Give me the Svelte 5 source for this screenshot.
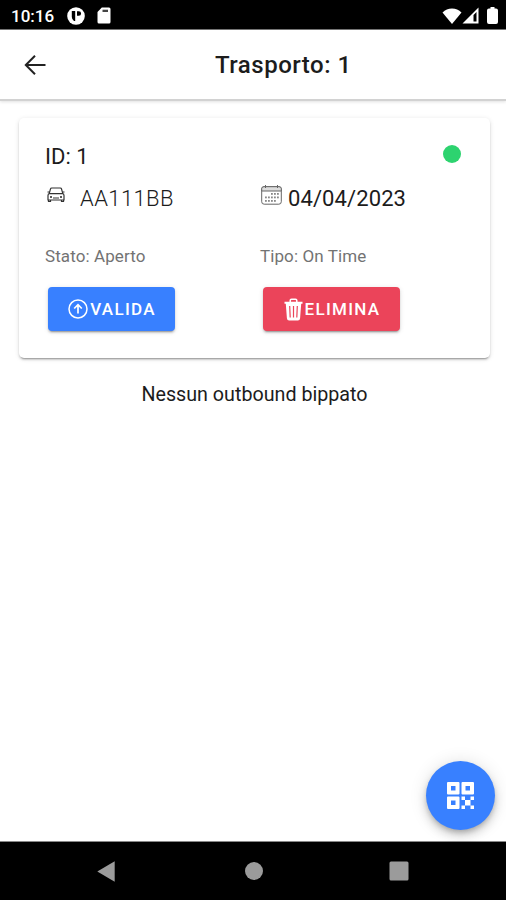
<script lang="ts">
  interface Transport {
    id: number;
    plate: string;
    date: string;
    status: string;
    type: string;
  }

  const transport: Transport = {
    id: 1,
    plate: 'AA111BB',
    date: '04/04/2023',
    status: 'Aperto',
    type: 'On Time',
  };

  // day cells of the calendar icon, top row starts later in the week
  const days = [
    [10, 8], [13, 8], [16, 8],
    [4, 11.5], [7, 11.5], [10, 11.5], [13, 11.5], [16, 11.5],
    [4, 15], [7, 15], [10, 15], [13, 15],
  ];
</script>

<div class="screen">
  <div class="status">
    <span class="status__time">10:16</span>
    <svg class="status__app" width="18" height="18" viewBox="0 0 18 18">
      <circle cx="9" cy="9" r="8.8" fill="#fff" />
      <path d="M4.8 4h3.4v10H7Q4.8 12.5 4.8 10zM10 4.2h1.8a2.2 2.2 0 0 1 0 4.6H10z" fill="#000" />
    </svg>
    <svg class="status__sd" width="14" height="17" viewBox="0 0 14 17">
      <path d="M4.8.5H12q1.5 0 1.5 1.5v13q0 1.5-1.5 1.5H2Q.5 16.5.5 15V5z" fill="#fff" />
      <path d="M5.5 2.7H11V5H5.5z" fill="#444" />
    </svg>
    <div class="status__right">
      <svg width="20" height="16" viewBox="0 0 20 16">
        <path d="M10 16 .5 4.5Q4.5.5 10 .5t9.5 4z" fill="#fff" />
      </svg>
      <svg width="17" height="17" viewBox="0 0 17 17">
        <path d="M16.5.5v16H.5zM11.5 8v6.5h3V5z" fill="#fff" fill-rule="evenodd" />
      </svg>
      <svg class="status__battery" width="11" height="17" viewBox="0 0 11 17">
        <path d="M3.5 0h4v1.5H9q2 0 2 2V15q0 2-2 2H2q-2 0-2-2V3.500q0-2 2-2h1.500z" fill="#fff" />
      </svg>
    </div>
  </div>

  <header class="toolbar">
    <button class="toolbar__back" aria-label="Indietro">
      <svg width="22" height="20" viewBox="0 0 22 20" fill="none" stroke="#222" stroke-width="2">
        <path d="M21.5 10H2M11 .8 1.800 10l9.200 9.200" />
      </svg>
    </button>
    <h1 class="toolbar__title">Trasporto: {transport.id}</h1>
  </header>

  <main class="content">
    <section class="card">
      <div class="card__head">
        <span class="card__id">ID: {transport.id}</span>
        <span class="card__dot"></span>
      </div>

      <div class="row row--main">
        <div class="cell">
          <svg class="car" width="18" height="16" viewBox="0 0 18 16" fill="none" stroke="#333" stroke-width="1.2">
            <path d="M2.200 6.700 3.500 1.800Q3.700 1 4.700 1h8.600q1 0 1.200.8l1.300 4.900M1 8.500q0-1.800 1.500-1.800h13q1.500 0 1.500 1.800V13H1zM1.500 13v1.500h2V13M14.500 13v1.500h2V13M.5 5h2M15.500 5h2M6 11h6" />
            <circle cx="4" cy="10" r="1" fill="#222" stroke="none" />
            <circle cx="14" cy="10" r="1" fill="#222" stroke="none" />
          </svg>
          <span class="plate">{transport.plate}</span>
        </div>
        <div class="cell">
          <svg class="calendar" width="21" height="20" viewBox="0 0 21 20" fill="none" stroke="#666">
            <rect x=".7" y="1.7" width="19.6" height="17.5" rx="2.5" />
            <path d="M.7 3.700q0-2 2.300-2h15q2.300 0 2.300 2V6H.7z" fill="#ddd" />
            <path d="M4.5 0v3M16.500 0v3" />
            {#each days as [x, y]}
              <rect {x} {y} width="1.8" height="1.8" fill="#888" stroke="none" />
            {/each}
          </svg>
          <span class="date">{transport.date}</span>
        </div>
      </div>

      <div class="row row--sub">
        <span class="status-text">Stato: {transport.status}</span>
        <span class="type-text">Tipo: {transport.type}</span>
      </div>

      <div class="row row--actions">
        <div>
          <button class="btn btn--primary">
            <svg width="20" height="20" viewBox="0 0 20 20" fill="none" stroke="#fff" stroke-width="1.5">
              <circle cx="10" cy="10" r="9" />
              <path d="M10 14.500V6M6.200 9.500 10 5.700l3.800 3.800" stroke-width="1.7" />
            </svg>
            <span class="btn__label">VALIDA</span>
          </button>
        </div>
        <div>
          <button class="btn btn--danger">
            <svg width="19" height="23" viewBox="0 0 19 23">
              <path d="M6.200 3.900V2.500q0-1.300 1.300-1.300h4q1.300 0 1.300 1.300v1.400" fill="none" stroke="#fff" stroke-width="1.5" />
              <path d="M.5 3.700h18v2h-1.300l-1.100 14.500q-.2 2.200-2.200 2.200H5.100q-2 0-2.200-2.200L1.800 5.700H.5z" fill="#fff" />
              <path d="m5.700 8 .5 11.500M9.500 8v11.500M13.300 8l-.5 11.500" stroke="#eb445a" stroke-width="1.2" />
            </svg>
            <span class="btn__label">ELIMINA</span>
          </button>
        </div>
      </div>
    </section>

    <p class="empty">Nessun outbound bippato</p>

    <button class="fab" aria-label="Scansiona codice">
      <svg width="27" height="27" viewBox="0 0 27 27" fill="#fff">
        <path fill-rule="evenodd" d="M1 0h10.500q1 0 1 1v10.500q0 1-1 1H1q-1 0-1-1V1q0-1 1-1zM4 4v4.500h4.500V4zM15.500 0H26q1 0 1 1v10.500q0 1-1 1H15.500q-1 0-1-1V1q0-1 1-1zM18.500 4v4.500H23V4zM1 14.500h10.500q1 0 1 1V26q0 1-1 1H1q-1 0-1-1V15.500q0-1 1-1zM4 18.500V23h4.500v-4.500z" />
        <path d="M14.500 14.500H18v3.500h-3.500zM23.500 14.500H27V18h-3.500zM18 18h5.500v5.500H18zM14.500 23.500H18V27h-3.500zM23.500 23.500H27V27h-3.500z" />
      </svg>
    </button>
  </main>

  <nav class="navbar">
    <svg width="18" height="21" viewBox="0 0 18 21"><path d="M17.700.3v20.400L.3 10.500z" fill="#9b9b9b" /></svg>
    <svg width="18" height="18" viewBox="0 0 18 18"><circle cx="9" cy="9" r="9" fill="#9b9b9b" /></svg>
    <svg width="20" height="20" viewBox="0 0 20 20"><rect x=".5" y=".5" width="19" height="19" rx="1.5" fill="#9b9b9b" /></svg>
  </nav>
</div>

<style>
  :global(body) {
    margin: 0;
  }
  .screen {
    display: flex;
    flex-direction: column;
    width: 506px;
    height: 900px;
    overflow: hidden;
    background: #fff;
    color: #1c1c1c;
    font-family: Roboto, sans-serif;
  }
  svg {
    display: block;
    flex: none;
  }
  button {
    border: 0;
    padding: 0;
    background: none;
    font: inherit;
  }
  .status {
    display: flex;
    align-items: center;
    flex: none;
    box-sizing: border-box;
    height: 30px;
    padding: 2px 8px 0 11px;
    background: #000;
    border-bottom: 1px solid #777;
    color: #fff;
  }
  .status__time {
    width: 56px;
    font-size: 17px;
    font-weight: 500;
  }
  .status__sd {
    margin-left: 12px;
  }
  .status__right {
    display: flex;
    align-items: center;
    margin-left: auto;
  }
  .status__battery {
    margin-left: 8px;
  }
  .toolbar {
    display: flex;
    align-items: center;
    flex: none;
    box-sizing: border-box;
    height: 71px;
    padding: 0 24px 0;
    border-bottom: 2px solid #d2d2d2;
    box-shadow: 0 1px 3px rgba(0, 0, 0, 0.12);
  }
  .toolbar__title {
    margin: 0 0 0 169px;
    font-size: 24px;
    font-weight: 500;
    line-height: 30px;
    letter-spacing: 0.5px;
    white-space: nowrap;
  }
  .content {
    position: relative;
    flex: 1;
    padding: 17px 16px 0 19px;
  }
  .card {
    box-sizing: border-box;
    height: 240px;
    padding: 25px 26px 0;
    border-radius: 5px;
    box-shadow:
      0 3px 1px -2px rgba(0, 0, 0, 0.2),
      0 2px 2px 0 rgba(0, 0, 0, 0.14),
      0 1px 5px 0 rgba(0, 0, 0, 0.12);
  }
  .card__head {
    display: flex;
    justify-content: space-between;
    height: 26px;
    font-size: 22px;
    line-height: 27px;
  }
  .card__dot {
    width: 18px;
    height: 18px;
    margin: 2px 3px 0 0;
    border-radius: 50%;
    background: #2dd36f;
  }
  .row {
    display: grid;
    grid-template-columns: 215px 1fr;
  }
  .row--main {
    height: 42px;
    margin-top: 16px;
    font-size: 22px;
    line-height: 28px;
  }
  .cell {
    display: flex;
    align-items: flex-start;
  }
  .car {
    margin: 2px 15px 0 2px;
  }
  .calendar {
    margin-right: 6px;
    margin-left: 1px;
  }
  .plate {
    font-weight: 300;
    letter-spacing: 0.4px;
  }
  .date {
    letter-spacing: 0.1px;
  }
  .row--sub {
    height: 42px;
    margin-top: 18px;
    color: #737373;
    font-size: 17px;
    line-height: 22px;
    letter-spacing: 0.1px;
  }
  .row--actions {
    padding-left: 3px;
  }
  .btn {
    display: flex;
    align-items: center;
    justify-content: center;
    height: 44px;
    border-radius: 4px;
    color: #fff;
    font-size: 17px;
    font-weight: 500;
    letter-spacing: 1.3px;
    box-shadow:
      0 3px 1px -2px rgba(0, 0, 0, 0.2),
      0 2px 2px 0 rgba(0, 0, 0, 0.14),
      0 1px 5px 0 rgba(0, 0, 0, 0.12);
  }
  .btn__label {
    margin-right: -1px;
    margin-left: 2px;
  }
  .btn--primary {
    width: 127px;
    background: #3880ff;
  }
  .btn--danger {
    width: 137px;
    background: #eb445a;
  }
  .empty {
    margin: 24px 0 0;
    font-size: 19.7px;
    line-height: 26px;
    text-align: center;
  }
  .fab {
    position: absolute;
    right: 11px;
    bottom: 11px;
    display: flex;
    align-items: center;
    justify-content: center;
    width: 69px;
    height: 69px;
    border-radius: 50%;
    background: #3880ff;
    box-shadow:
      0 3px 5px -1px rgba(0, 0, 0, 0.2),
      0 6px 10px 0 rgba(0, 0, 0, 0.14),
      0 1px 18px 0 rgba(0, 0, 0, 0.12);
  }
  .navbar {
    display: grid;
    grid-template-columns: 148px 144px 20px;
    align-items: center;
    flex: none;
    box-sizing: border-box;
    height: 59px;
    padding-left: 97px;
    border-top: 1px solid #888;
    background: #000;
  }
</style>
